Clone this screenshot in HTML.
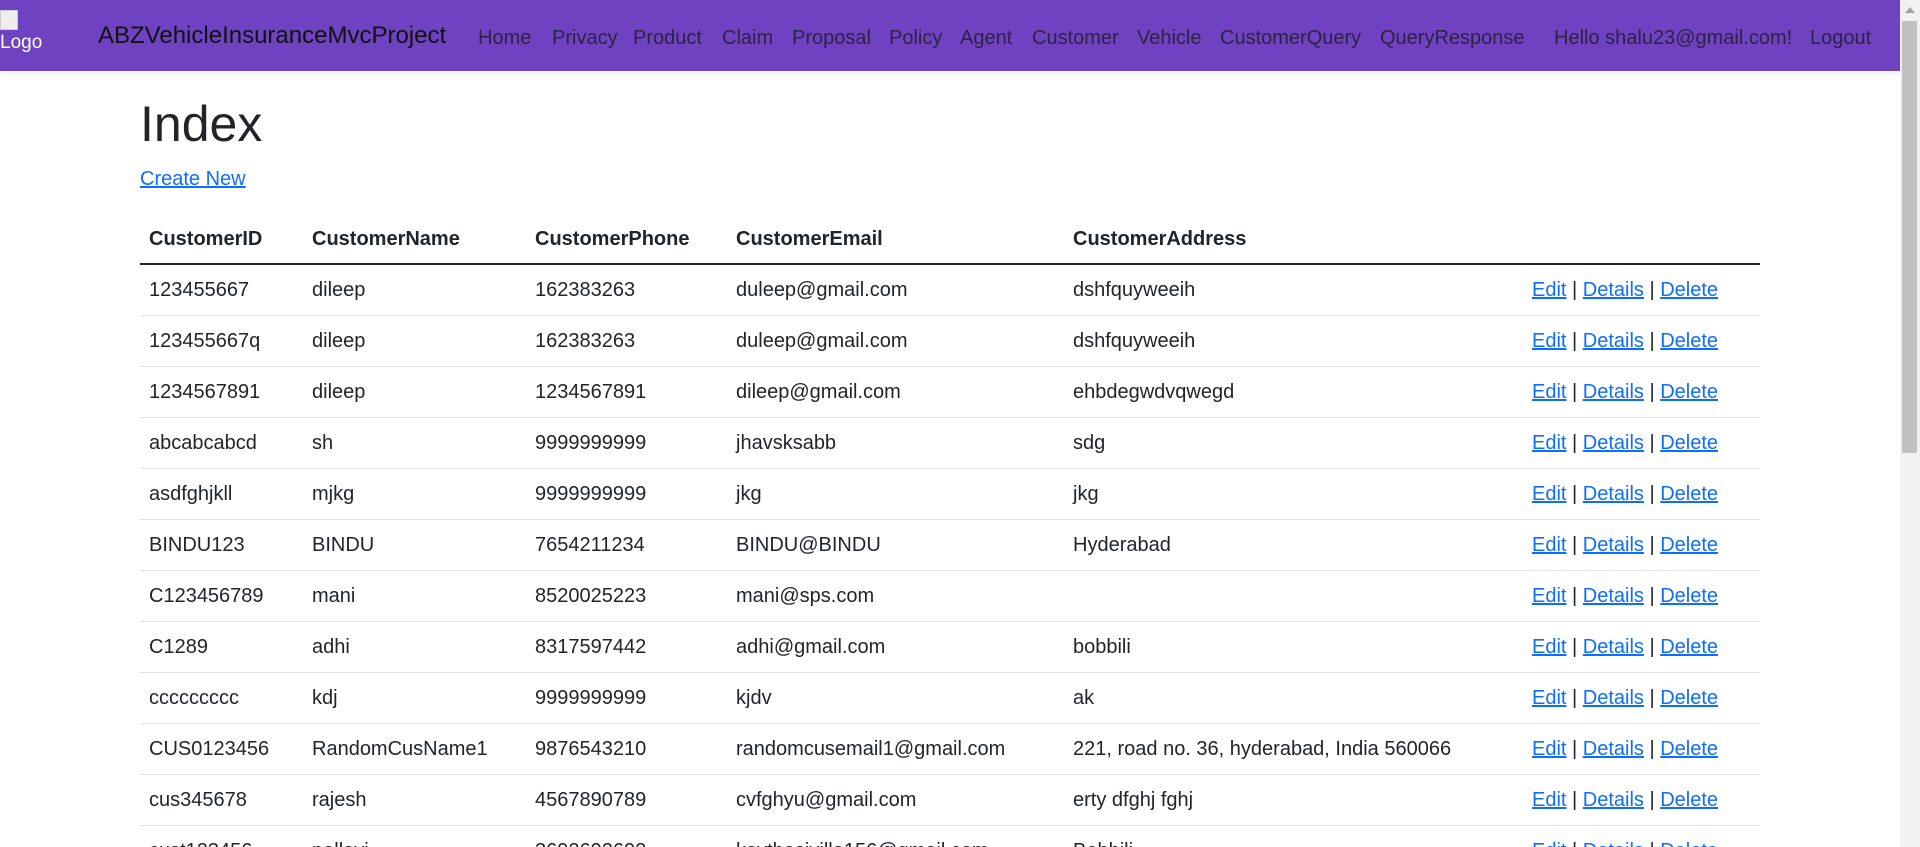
<!DOCTYPE html>
<html><head><meta charset="utf-8"><style>
html,body{margin:0;padding:0;width:1920px;height:847px;overflow:hidden;background:#fff;font-family:"Liberation Sans",sans-serif;color:#212529}
#wrap{position:relative;width:1920px;height:847px;overflow:hidden}
.nav{position:absolute;left:0;top:0;width:1900px;height:71px;background:#6f42c1;box-shadow:0 2px 8px rgba(0,0,0,.08)}
.nav span{position:absolute;top:26px;font-size:20px;line-height:24px;color:#2e2245;white-space:nowrap}
.nav .brand{color:#111;font-size:24px;top:24px}
.logo{position:absolute;left:0;top:10px;color:#fff;font-size:19px;line-height:22px}
.logo i{display:block;width:16px;height:18px;border:1px solid #ccc;background:#eee;margin-bottom:2px}
.sb{position:absolute;left:1900px;top:0;width:20px;height:847px;background:#f1f1f1}
.sb div{position:absolute;left:2px;top:21px;width:15px;height:432px;background:#c1c1c1}
.sb b{position:absolute;left:5px;top:7px;border:5px solid transparent;border-bottom:6px solid #a3a3a3;border-top:0}
h1{position:absolute;left:140px;top:94px;margin:0;font-size:50px;line-height:60px;font-weight:500}
a{color:#0d6efd;text-decoration:underline}
.cn{position:absolute;left:140px;top:166px;font-size:20px;line-height:26px}
table{position:absolute;left:140px;top:214px;width:1620px;border-collapse:collapse;font-size:20px}
th{text-align:left;font-weight:bold;height:50px;box-sizing:border-box;border-bottom:2px solid #212529;padding:2px 0 0 9px;vertical-align:middle}
td{height:51px;border-bottom:1px solid #dee2e6;padding:2px 0 0 9px;box-sizing:border-box;vertical-align:middle;white-space:nowrap}
</style></head><body><div id="wrap">
<div class="nav">
<div class="logo"><i></i>Logo</div>
<span class="brand" style="left:98px">ABZVehicleInsuranceMvcProject</span>
<span style="left:478px">Home</span>
<span style="left:552px">Privacy</span>
<span style="left:633px">Product</span>
<span style="left:722px">Claim</span>
<span style="left:792px">Proposal</span>
<span style="left:889px">Policy</span>
<span style="left:960px">Agent</span>
<span style="left:1032px">Customer</span>
<span style="left:1137px">Vehicle</span>
<span style="left:1220px">CustomerQuery</span>
<span style="left:1380px">QueryResponse</span>
<span style="left:1554px">Hello shalu23@gmail.com!</span>
<span style="left:1810px">Logout</span>
</div>
<div class="sb"><b></b><div></div></div>
<h1>Index</h1>
<div class="cn"><a>Create New</a></div>
<table>
<colgroup><col style="width:163px"><col style="width:223px"><col style="width:201px"><col style="width:337px"><col style="width:459px"><col></colgroup>
<tr><th>CustomerID</th><th>CustomerName</th><th>CustomerPhone</th><th>CustomerEmail</th><th>CustomerAddress</th><th></th></tr>
<tr><td>123455667</td><td>dileep</td><td>162383263</td><td>duleep@gmail.com</td><td>dshfquyweeih</td><td><a>Edit</a> | <a>Details</a> | <a>Delete</a></td></tr>
<tr><td>123455667q</td><td>dileep</td><td>162383263</td><td>duleep@gmail.com</td><td>dshfquyweeih</td><td><a>Edit</a> | <a>Details</a> | <a>Delete</a></td></tr>
<tr><td>1234567891</td><td>dileep</td><td>1234567891</td><td>dileep@gmail.com</td><td>ehbdegwdvqwegd</td><td><a>Edit</a> | <a>Details</a> | <a>Delete</a></td></tr>
<tr><td>abcabcabcd</td><td>sh</td><td>9999999999</td><td>jhavsksabb</td><td>sdg</td><td><a>Edit</a> | <a>Details</a> | <a>Delete</a></td></tr>
<tr><td>asdfghjkll</td><td>mjkg</td><td>9999999999</td><td>jkg</td><td>jkg</td><td><a>Edit</a> | <a>Details</a> | <a>Delete</a></td></tr>
<tr><td>BINDU123</td><td>BINDU</td><td>7654211234</td><td>BINDU@BINDU</td><td>Hyderabad</td><td><a>Edit</a> | <a>Details</a> | <a>Delete</a></td></tr>
<tr><td>C123456789</td><td>mani</td><td>8520025223</td><td>mani@sps.com</td><td></td><td><a>Edit</a> | <a>Details</a> | <a>Delete</a></td></tr>
<tr><td>C1289</td><td>adhi</td><td>8317597442</td><td>adhi@gmail.com</td><td>bobbili</td><td><a>Edit</a> | <a>Details</a> | <a>Delete</a></td></tr>
<tr><td>ccccccccc</td><td>kdj</td><td>9999999999</td><td>kjdv</td><td>ak</td><td><a>Edit</a> | <a>Details</a> | <a>Delete</a></td></tr>
<tr><td>CUS0123456</td><td>RandomCusName1</td><td>9876543210</td><td>randomcusemail1@gmail.com</td><td>221, road no. 36, hyderabad, India 560066</td><td><a>Edit</a> | <a>Details</a> | <a>Delete</a></td></tr>
<tr><td>cus345678</td><td>rajesh</td><td>4567890789</td><td>cvfghyu@gmail.com</td><td>erty dfghj fghj</td><td><a>Edit</a> | <a>Details</a> | <a>Delete</a></td></tr>
<tr><td>cust123456</td><td>pallavi</td><td>3692692692</td><td>kavthasivilla156@gmail.com</td><td>Bobbili</td><td><a>Edit</a> | <a>Details</a> | <a>Delete</a></td></tr>
</table>
</div></body></html>
